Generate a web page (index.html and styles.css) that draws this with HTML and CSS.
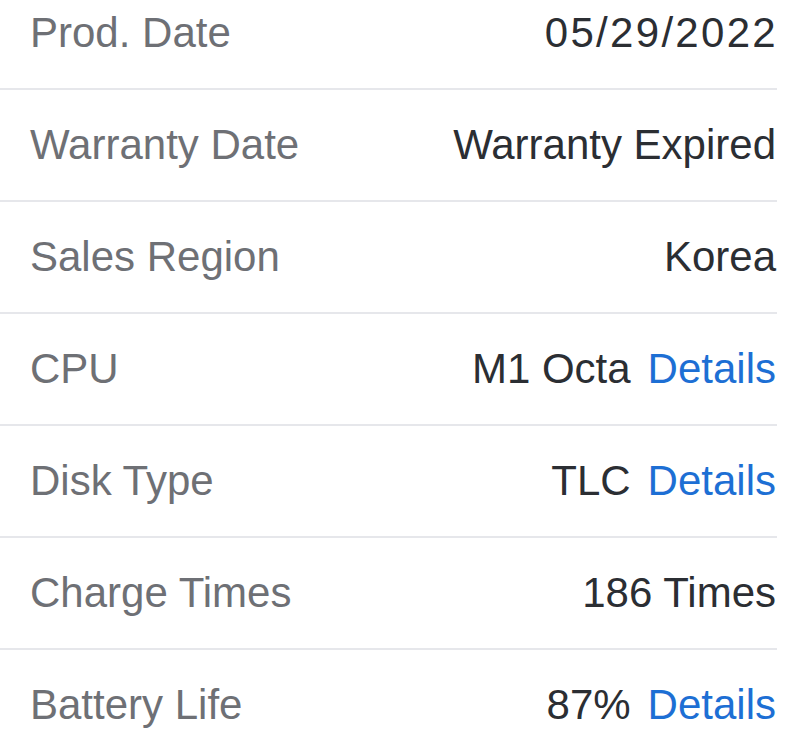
FILE: index.html
```html
<!DOCTYPE html>
<html lang="en">
<head>
<meta charset="utf-8">
<title>Device Info</title>
<link rel="stylesheet" href="styles.css">
</head>
<body>
<ul class="info-list">
  <li class="info-row"><span class="label">Prod. Date</span><span class="value date">05/29/2022</span></li>
  <li class="info-row"><span class="label">Warranty Date</span><span class="value">Warranty Expired</span></li>
  <li class="info-row"><span class="label">Sales Region</span><span class="value">Korea</span></li>
  <li class="info-row"><span class="label">CPU</span><span class="value">M1 Octa<a class="details" href="#">Details</a></span></li>
  <li class="info-row"><span class="label">Disk Type</span><span class="value">TLC<a class="details" href="#">Details</a></span></li>
  <li class="info-row"><span class="label">Charge Times</span><span class="value">186 Times</span></li>
  <li class="info-row"><span class="label">Battery Life</span><span class="value">87%<a class="details" href="#">Details</a></span></li>
</ul>
</body>
</html>
```
FILE: styles.css
```css
html, body {
  margin: 0;
  padding: 0;
  background: #ffffff;
  overflow: hidden;
}
body {
  font-family: "Liberation Sans", Arial, sans-serif;
}
.info-list {
  list-style: none;
  margin: -22px 0 0 0;
  padding: 0 23px 0 0;
}
.info-row {
  display: flex;
  align-items: center;
  justify-content: space-between;
  height: 110px;
  border-bottom: 2px solid #e6e7eb;
  padding-left: 30px;
}
.label {
  font-size: 42px;
  color: #6e7075;
}
.value {
  display: flex;
  align-items: center;
  gap: 17px;
  font-size: 42px;
  color: #2b2e33;
  margin-right: 1px;
}
.value.date {
  letter-spacing: 2.3px;
  margin-right: -1px;
}
.details {
  color: #1d6fd4;
  text-decoration: none;
}
```
